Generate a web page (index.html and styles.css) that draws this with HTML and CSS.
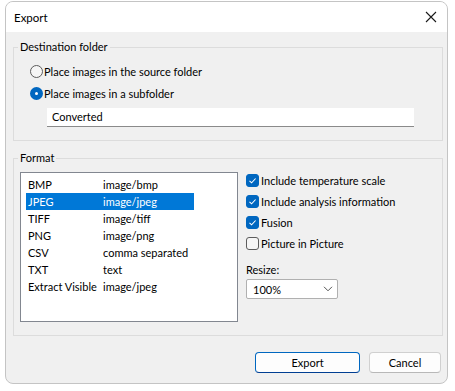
FILE: index.html
```html
<!DOCTYPE html>
<html lang="en">
<head>
    <meta charset="UTF-8">
    <title>Export</title>
    <link rel="stylesheet" href="styles.css">
</head>
<body>
    <div class="window">
        <div class="titlebar">
            <span class="title">Export</span>
            <svg class="close" width="12" height="12" viewBox="0 0 12 12"><path d="M1 1L11 11M11 1L1 11" stroke="#1a1a1a" stroke-width="1.1" fill="none"/></svg>
        </div>
        <div class="content">
            <fieldset class="group dest">
                <legend>Destination folder</legend>
                <label class="option">
                    <span class="radio"></span>
                    Place images in the source folder
                </label>
                <label class="option">
                    <span class="radio checked"></span>
                    Place images in a subfolder
                </label>
                <div class="textbox">Converted</div>
            </fieldset>

            <fieldset class="group format">
                <legend>Format</legend>
                <div class="format-row">
                    <div class="listbox">
                        <div class="item"><span class="name">BMP</span><span>image/bmp</span></div>
                        <div class="item selected"><span class="name">JPEG</span><span>image/jpeg</span></div>
                        <div class="item"><span class="name">TIFF</span><span>image/tiff</span></div>
                        <div class="item"><span class="name">PNG</span><span>image/png</span></div>
                        <div class="item"><span class="name">CSV</span><span>comma separated</span></div>
                        <div class="item"><span class="name">TXT</span><span>text</span></div>
                        <div class="item"><span class="name">Extract Visible</span><span>image/jpeg</span></div>
                    </div>
                    <div class="options">
                        <label class="check-row"><span class="checkbox checked"><svg width="13" height="13" viewBox="0 0 13 13"><path d="M3.5 6.8L5.6 8.8L9.6 4.5" stroke="#fff" stroke-width="1.1" fill="none"/></svg></span>Include temperature scale</label>
                        <label class="check-row"><span class="checkbox checked"><svg width="13" height="13" viewBox="0 0 13 13"><path d="M3.5 6.8L5.6 8.8L9.6 4.5" stroke="#fff" stroke-width="1.1" fill="none"/></svg></span>Include analysis information</label>
                        <label class="check-row"><span class="checkbox checked"><svg width="13" height="13" viewBox="0 0 13 13"><path d="M3.5 6.8L5.6 8.8L9.6 4.5" stroke="#fff" stroke-width="1.1" fill="none"/></svg></span>Fusion</label>
                        <label class="check-row"><span class="checkbox"></span>Picture in Picture</label>
                        <div class="resize-label">Resize:</div>
                        <div class="select">
                            <span>100%</span>
                            <svg width="10" height="6" viewBox="0 0 10 6"><path d="M1 0.8L5 4.8L9 0.8" stroke="#555" stroke-width="1" fill="none"/></svg>
                        </div>
                    </div>
                </div>
            </fieldset>

            <div class="buttons">
                <button class="btn default">Export</button>
                <button class="btn">Cancel</button>
            </div>
        </div>
    </div>
</body>
</html>
```

FILE: styles.css
```css
body {
    margin: 0;
    background: #fff;
    font-family: Lato, "Liberation Sans", sans-serif;
    font-size: 11px;
    color: #000;
}
.window {
    margin: 1px 0 0 5px;
    width: 441px;
    height: 381px;
    border: 1px solid #c4c4c4;
    border-radius: 8px;
    background: #f0f0f0;
    overflow: hidden;
}
.titlebar {
    height: 30px;
    background: #fff;
    display: flex;
    align-items: center;
    justify-content: space-between;
    padding: 0 10px 0 8px;
}
.title {
    font-size: 11.5px;
}
.content {
    padding: 7px 4px 0 7px;
}
.group {
    margin: 0;
    border: 1px solid #dcdcdc;
    padding: 0 8px 0 6px;
}
.group legend {
    padding: 0 2px;
    margin-left: -2px;
    line-height: 16px;
}
.dest {
    height: 95px;
    padding-top: 5px;
}
.option {
    display: flex;
    align-items: center;
    gap: 1px;
    height: 22px;
    margin-left: 10px;
    white-space: nowrap;
}
.radio {
    width: 11px;
    height: 11px;
    border: 1px solid #5c5c5c;
    border-radius: 50%;
    background: #f5f5f5;
    box-sizing: content-box;
}
.radio.checked {
    width: 3px;
    height: 3px;
    border: 5px solid #0067c0;
    background: #fff;
}
.textbox {
    margin: 4px 20px 0 27px;
    height: 18px;
    background: #fff;
    border-bottom: 1px solid #8a8a8a;
    padding-left: 5px;
    line-height: 18px;
}
.format {
    margin-top: 9px;
    height: 178px;
    padding-top: 6px;
}
.format-row {
    display: flex;
    gap: 8px;
}
.listbox {
    width: 218px;
    height: 150px;
    border: 1px solid #828790;
    background: #fff;
    padding: 3px 5px;
    box-sizing: border-box;
}
.item {
    display: flex;
    height: 17px;
    line-height: 17px;
    padding-left: 2px;
    width: 166px;
    white-space: nowrap;
}
.item .name {
    width: 75px;
    flex: none;
}
.item.selected {
    background: #0078d7;
    color: #fff;
}
.options {
    margin-top: -2px;
    white-space: nowrap;
}
.check-row {
    display: flex;
    align-items: center;
    gap: 2px;
    height: 21px;
}
.checkbox {
    width: 13px;
    height: 13px;
    box-sizing: border-box;
    border: 1px solid #5c5c5c;
    border-radius: 3px;
    background: #f5f5f5;
    display: flex;
}
.checkbox.checked {
    background: #0067c0;
    border-color: #0067c0;
}
.checkbox svg {
    margin: -1px;
}
.resize-label {
    margin-top: 7px;
    height: 18px;
    line-height: 18px;
}
.select {
    width: 92px;
    height: 20px;
    box-sizing: border-box;
    border: 1px solid #b0b0b0;
    border-radius: 2px;
    background: #fff;
    display: flex;
    align-items: center;
    justify-content: space-between;
    padding: 0 4px 0 6px;
}
.buttons {
    display: flex;
    justify-content: flex-end;
    gap: 9px;
    margin-top: 16px;
    padding-right: 2px;
}
.btn {
    font-family: inherit;
    font-size: 11px;
    height: 21px;
    background: #fdfdfd;
    border: 1px solid #d0d0d0;
    border-bottom-color: #b8b8b8;
    border-radius: 4px;
    padding: 0;
    width: 72px;
}
.btn.default {
    width: 105px;
    border: 1px solid #0067c0;
    border-bottom-color: #003e92;
}
```
